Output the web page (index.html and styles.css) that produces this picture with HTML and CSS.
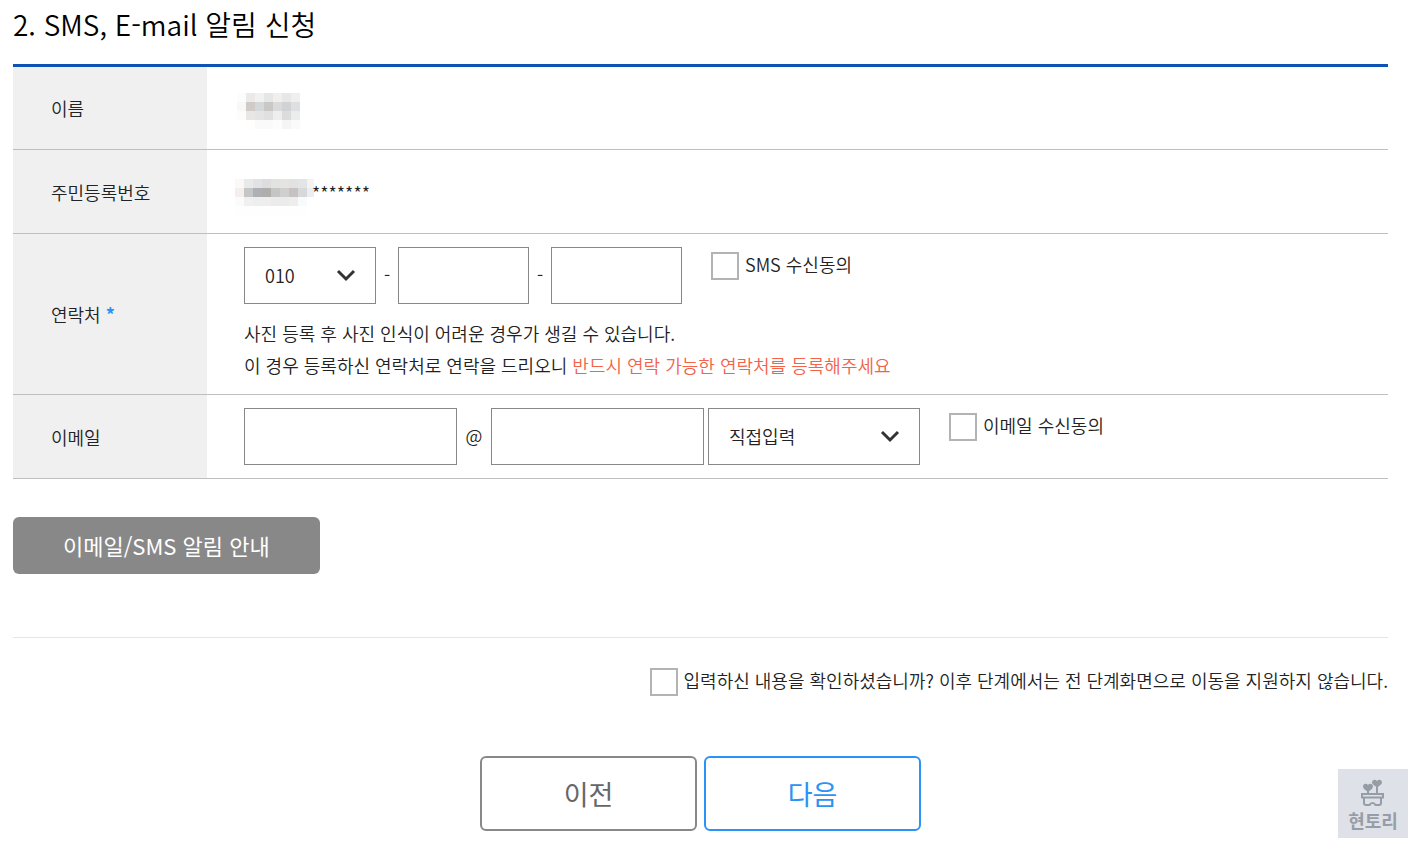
FILE: index.html
```html
<!DOCTYPE html>
<html lang="ko">
<head>
<meta charset="utf-8">
<title>SMS, E-mail 알림 신청</title>
<link rel="stylesheet" href="styles.css">
</head>
<body>
<main class="page">
  <h2 class="title">2. SMS, E-mail 알림 신청</h2>

  <table class="form-table">
    <tbody>
      <tr class="row-first">
        <th scope="row">이름</th>
        <td>
          <svg class="mosaic" width="64" height="36" viewBox="0 0 64 36" shape-rendering="crispEdges" aria-hidden="true">
            <path fill="#fcfcfc" d="M1 0h9v36H1z"/><path fill="#f8f8f7" d="M1 9h9v9H1z"/><path fill="#fff" d="M1 27h9v9H1z"/>
            <path fill="#ebeae9" d="M10 0h9v9h-9z"/><path fill="#f1f1f1" d="M19 0h9v9h-9z"/><path fill="#e6e6e6" d="M28 0h9v9h-9z"/><path fill="#f1efee" d="M37 0h9v9h-9z"/><path fill="#e7e7e7" d="M46 0h9v9h-9z"/><path fill="#efefef" d="M55 0h9v9h-9z"/>
            <path fill="#d0cbc8" d="M10 9h9v9h-9z"/><path fill="#d4d8d9" d="M19 9h9v9h-9z"/><path fill="#cac8c7" d="M28 9h9v9h-9z"/><path fill="#dadadb" d="M37 9h9v9h-9z"/><path fill="#d0d2d4" d="M46 9h9v9h-9z"/><path fill="#dedfe2" d="M55 9h9v9h-9z"/>
            <path fill="#e8e7e5" d="M10 18h9v9h-9z"/><path fill="#e2e5e4" d="M19 18h9v9h-9z"/><path fill="#e0e0e0" d="M28 18h9v9h-9z"/><path fill="#eeeeee" d="M37 18h9v9h-9z"/><path fill="#dadddb" d="M46 18h9v9h-9z"/><path fill="#ebeced" d="M55 18h9v9h-9z"/>
            <path fill="#fefefe" d="M10 27h9v9h-9z"/><path fill="#fafafa" d="M19 27h18v9H19z"/><path fill="#fdfdfd" d="M37 27h9v9h-9z"/><path fill="#f5f5f5" d="M46 27h9v9h-9z"/><path fill="#fafafa" d="M55 27h9v9h-9z"/>
          </svg>
        </td>
      </tr>
      <tr>
        <th scope="row">주민등록번호</th>
        <td>
          <div class="masked">
            <svg class="mosaic" width="79" height="36" viewBox="0 0 79 36" shape-rendering="crispEdges" aria-hidden="true">
              <path fill="#fbf9f8" d="M0 0h9v9H0z"/><path fill="#e7e9ea" d="M9 0h9v9H9z"/><path fill="#e0e2e4" d="M18 0h9v9h-9z"/><path fill="#dddddd" d="M27 0h9v9h-9z"/><path fill="#e2e2e2" d="M36 0h9v9h-9z"/><path fill="#e5e4e2" d="M45 0h9v9h-9z"/><path fill="#e2e2e2" d="M54 0h9v9h-9z"/><path fill="#e3e4e6" d="M63 0h9v9h-9z"/><path fill="#f4f3f2" d="M72 0h7v9h-7z"/>
              <path fill="#f4efec" d="M0 9h9v9H0z"/><path fill="#c5c6c6" d="M9 9h9v9H9z"/><path fill="#afb0b5" d="M18 9h9v9h-9z"/><path fill="#b0aeac" d="M27 9h9v9h-9z"/><path fill="#c4c6c4" d="M36 9h9v9h-9z"/><path fill="#cfcfcf" d="M45 9h9v9h-9z"/><path fill="#c7c2c1" d="M54 9h9v9h-9z"/><path fill="#d7d8db" d="M63 9h9v9h-9z"/><path fill="#ebedef" d="M72 9h7v9h-7z"/>
              <path fill="#fcfbfb" d="M0 18h9v9H0z"/><path fill="#f0f0f1" d="M9 18h9v9H9z"/><path fill="#eeeeee" d="M18 18h18v9H18z"/><path fill="#eaebea" d="M36 18h18v9H36z"/><path fill="#efeeee" d="M54 18h9v9h-9z"/><path fill="#f8fbfb" d="M63 18h9v9h-9z"/><path fill="#fefefe" d="M0 27h72v9H0z"/>
            </svg>
            <span>*******</span>
          </div>
        </td>
      </tr>
      <tr>
        <th scope="row">연락처 <span class="required">*</span></th>
        <td>
          <div class="fields">
            <span class="select select-phone">
              <select aria-label="통신사 번호"><option>010</option><option>011</option><option>016</option></select>
              <svg class="chevron" width="20" height="14" viewBox="0 0 20 14" aria-hidden="true"><path d="M2 3l8 8 8-8"/></svg>
            </span>
            <span class="dash">-</span>
            <input class="field field-phone" type="text" aria-label="전화번호 가운데 자리">
            <span class="dash">-</span>
            <input class="field field-phone" type="text" aria-label="전화번호 끝자리">
            <label class="check agree"><input type="checkbox"><span>SMS 수신동의</span></label>
          </div>
          <p class="note">사진 등록 후 사진 인식이 어려운 경우가 생길 수 있습니다.<br>이 경우 등록하신 연락처로 연락을 드리오니 <em>반드시 연락 가능한 연락처를 등록해주세요</em></p>
        </td>
      </tr>
      <tr>
        <th scope="row">이메일</th>
        <td>
          <div class="fields">
            <input class="field field-email" type="text" aria-label="이메일 아이디">
            <span class="at">@</span>
            <input class="field field-email" type="text" aria-label="이메일 도메인">
            <span class="select select-domain">
              <select aria-label="도메인 선택"><option>직접입력</option></select>
              <svg class="chevron" width="20" height="14" viewBox="0 0 20 14" aria-hidden="true"><path d="M2 3l8 8 8-8"/></svg>
            </span>
            <label class="check agree"><input type="checkbox"><span>이메일 수신동의</span></label>
          </div>
        </td>
      </tr>
    </tbody>
  </table>

  <button class="guide" type="button">이메일/SMS 알림 안내</button>

  <section class="confirm">
    <label class="check"><input type="checkbox"><span>입력하신 내용을 확인하셨습니까? 이후 단계에서는 전 단계화면으로 이동을 지원하지 않습니다.</span></label>
  </section>

  <div class="actions">
    <button class="step" type="button">이전</button>
    <button class="step step-next" type="button">다음</button>
  </div>
</main>

<div class="badge">
  <svg width="26" height="28" viewBox="0 0 26 28" aria-hidden="true">
    <path class="heart" d="M8 13C5 11 3 9.500 3 7.500c0-3 3.500-3.500 5-1.500 1.500-2 5-1.500 5 1.500 0 2-2 3.500-5 5.500z"/>
    <path class="heart" d="M17 8.500C14 6.500 12 5 12 3.500c0-3 3.500-3.500 5-1.500C18.500 0 22 .500 22 3.500c0 1.500-2 3-5 5z"/>
    <path class="line" d="M8 11v4M17 6v9M2 15h21v3.500H2zM4 18v6q0 2 2 2h3.500q1-2 3-2t3 2H19q2 0 2-2v-6"/>
  </svg>
  <span>현토리</span>
</div>
</body>
</html>
```
FILE: styles.css
```css
* {
  box-sizing: border-box;
}

body {
  margin: 0;
  background: #fff;
  color: #222;
  font-family: "Noto Sans CJK KR", sans-serif;
  font-size: 18px;
  font-weight: 350;
  line-height: 32px;
}

input,
select,
button {
  margin: 0;
  font: inherit;
  color: inherit;
}

.page {
  padding: 4px 32px 16px 13px;
}

.title {
  margin: 0 0 20px;
  color: #000;
  font-size: 28px;
  font-weight: 350;
  line-height: 40px;
}

.form-table {
  width: 100%;
  border-top: 3px solid #0f52b5;
  border-spacing: 0;
}

.form-table th,
.form-table td {
  height: 84px;
  padding: 13px 0 13px 37px;
  border-bottom: 1px solid #bfbfbf;
  text-align: left;
}

.form-table .row-first > * {
  height: 83px;
}

.form-table th {
  width: 194px;
  padding-left: 38px;
  background: #f0f0f0;
  font-weight: 350;
}

.required {
  color: #2b93f5;
  font-weight: 700;
}

.mosaic {
  display: block;
  flex: none;
  margin: 6px 0 0 -8px;
}

.masked {
  display: flex;
  align-items: center;
  margin-left: -1px;
}

.masked .mosaic {
  margin: 10px -2px 0 -8px;
}

.fields {
  display: flex;
  align-items: center;
}

.field,
.select select {
  height: 57px;
  border: 1px solid #888;
  border-radius: 0;
  background: #fff;
}

.field {
  padding: 0 19px;
}

.field-phone {
  width: 131px;
}

.field-email {
  width: 213px;
}

.select {
  display: grid;
  align-items: center;
}

.select select,
.chevron {
  grid-area: 1 / 1;
}

.select select {
  width: 100%;
  padding: 0 20px 1px;
  appearance: none;
}

.select-phone {
  width: 132px;
}

.select-domain {
  width: 212px;
  margin-left: 4px;
}

.chevron {
  justify-self: end;
  margin: 0 20px 2px 0;
  fill: none;
  stroke: #333;
  stroke-width: 3;
  pointer-events: none;
}

.dash {
  width: 22px;
  padding-bottom: 4px;
  text-align: center;
}

.at {
  width: 34px;
  padding-bottom: 4px;
  text-align: center;
}

.check {
  display: flex;
  align-items: center;
  gap: 6px;
}

.check span {
  padding-bottom: 4px;
  line-height: 28px;
}

.check input {
  flex: none;
  width: 28px;
  height: 28px;
  border: 2px solid #b3b3b3;
  background: #fff;
  appearance: none;
}

.check input:checked {
  background: #2b93f5;
}

.agree {
  align-self: flex-start;
  margin: 3px 0 0 29px;
}

.note {
  margin: 13px 0 0;
}

.note em {
  color: #f4624a;
  font-style: normal;
}

.guide {
  display: block;
  height: 57px;
  margin-top: 38px;
  padding: 0 50px 2px;
  border: 0;
  border-radius: 6px;
  background: #888;
  color: #fff;
  font-size: 22px;
  font-weight: 400;
}

.confirm {
  display: flex;
  justify-content: flex-end;
  margin-top: 63px;
  padding-top: 28px;
  border-top: 1px solid #e5e5e5;
}

.actions {
  display: flex;
  justify-content: center;
  gap: 7px;
  margin-top: 58px;
}

.step {
  width: 217px;
  height: 75px;
  border: 2px solid #888;
  border-radius: 6px;
  background: #fff;
  color: #666;
  font-size: 27px;
  font-weight: 400;
}

.step-next {
  border-color: #2b93f5;
  color: #2b93f5;
}

.badge {
  position: fixed;
  right: 12px;
  bottom: 10px;
  display: flex;
  flex-direction: column;
  align-items: center;
  width: 70px;
  height: 69px;
  padding-top: 10px;
  background: #dee2e8;
  color: #979da6;
  font-size: 18px;
  font-weight: 700;
  line-height: 26px;
}

.heart {
  fill: #979da6;
}

.line {
  fill: none;
  stroke: #979da6;
  stroke-width: 2;
}
```
